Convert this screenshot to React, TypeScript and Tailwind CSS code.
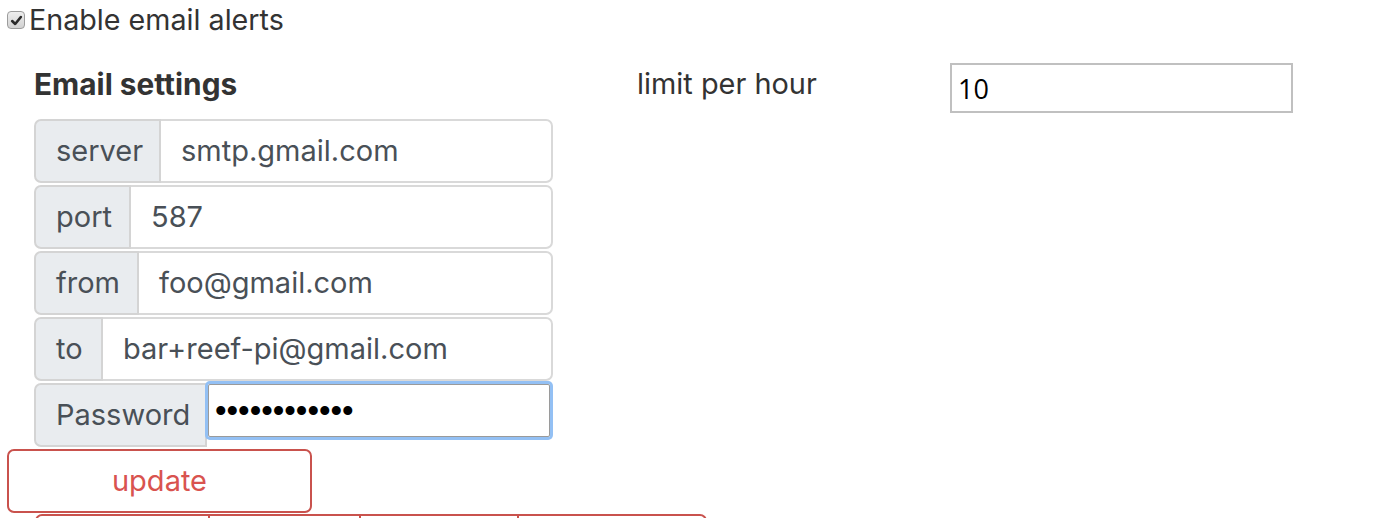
import React from "react";

const font = { fontFamily: "Inter, 'Noto Sans', sans-serif" };

function Row({ label, value, addonW }: { label: string; value: string; addonW: string }) {
  return (
    <div className="flex h-[64px] mb-[2px] w-[519px]">
      <div className={`${addonW} shrink-0 flex items-center pl-[20px] bg-[#e9ecef] border-2 border-[#d4d4d4] rounded-l-[7px] text-[#495057] text-[29px]`}>
        {label}
      </div>
      <div className="flex-1 flex items-center pl-[20px] bg-white border-2 border-l-0 border-[#d9d9d9] rounded-r-[7px] text-[#495057] text-[29px]">
        {value}
      </div>
    </div>
  );
}

export default function App() {
  return (
    <div className="w-[1388px] h-[518px] overflow-hidden bg-white pl-[7px]" style={font}>
      <label className="flex items-center h-[40px] text-[28.7px] text-[#333333]">
        <span className="w-[18px] h-[18px] mr-[4px] rounded-[4px] border border-[#9c9c9c] bg-gradient-to-b from-[#eeeeee] to-[#d2d2d2] flex items-center justify-center">
          <svg width="13" height="13" viewBox="0 0 12 12">
            <path d="M2 6.5 L4.8 9.2 L10 2.8" stroke="#2a2a2a" strokeWidth="2.4" fill="none" strokeLinecap="round" strokeLinejoin="round" />
          </svg>
        </span>
        Enable email alerts
      </label>

      <div className="flex ml-[27px]">
        <div className="w-[519px]">
          <div className="mt-[28px] mb-[19px] leading-[32px] text-[29.8px] font-bold text-[#333333]">Email settings</div>
          <Row label="server" value="smtp.gmail.com" addonW="w-[127px]" />
          <Row label="port" value="587" addonW="w-[97px]" />
          <Row label="from" value="foo@gmail.com" addonW="w-[105px]" />
          <Row label="to" value="bar+reef-pi@gmail.com" addonW="w-[69px]" />
          <div className="flex h-[64px] w-[519px]">
            <div className="w-[173px] shrink-0 flex items-center pl-[20px] bg-[#e9ecef] border-2 border-[#d4d4d4] rounded-l-[7px] text-[#495057] text-[29px]">
              Password
            </div>
            <div className="flex-1 self-start -mt-[2px] -ml-[2px] h-[59px] p-[3px]">
              <input
                type="password"
                readOnly
                value="abcdefghijkl"
                className="w-full h-full border border-[#9a9a9a] rounded-[2px] shadow-[0_0_0_3px_#93c0f4] outline-none pl-[6px] text-black text-[33px]"
                style={{ fontFamily: "'Liberation Sans', Arial, sans-serif" }}
              />
            </div>
          </div>
        </div>
        <div className="ml-[84px] flex items-start">
          <div className="w-[313px] mt-[28px] leading-[32px] text-[28.9px] text-[#333333]">limit per hour</div>
          <input
            readOnly
            value="10"
            className="w-[343px] h-[50px] mt-[23px] border-2 border-[#c0c0c0] pl-[6px] text-black text-[27px] outline-none"
            style={{ fontFamily: "'Open Sans', sans-serif" }}
          />
        </div>
      </div>

      <button className="mt-[2px] w-[305px] h-[64px] border-2 border-[#c9524d] rounded-[7px] text-[#d9534f] text-[29px] bg-white">
        update
      </button>

      <div className="flex ml-[28px] mt-[1px]">
        <button className="w-[175px] h-[64px] border-2 border-[#c9524d] rounded-l-[7px] bg-white" />
        <button className="w-[151px] h-[64px] border-2 border-l-0 border-[#c9524d] bg-white" />
        <button className="w-[158px] h-[64px] border-2 border-l-0 border-[#c9524d] bg-white" />
        <button className="w-[188px] h-[64px] border-2 border-l-0 border-[#c9524d] rounded-r-[7px] bg-white" />
      </div>
    </div>
  );
}
